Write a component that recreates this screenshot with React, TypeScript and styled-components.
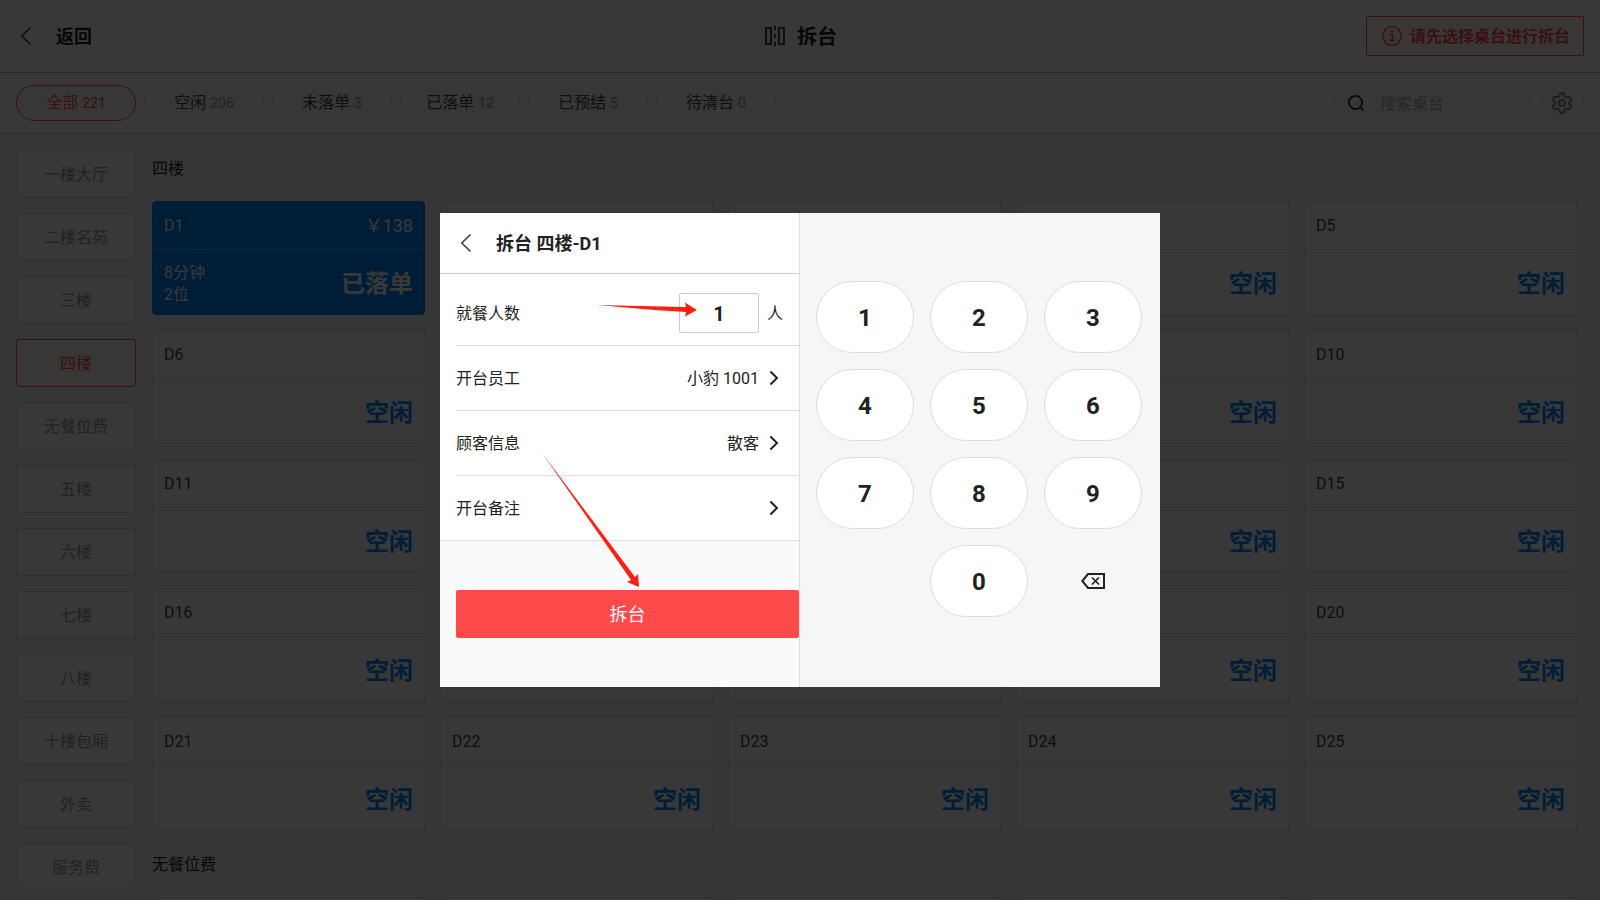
import React from "react";
import styled, { createGlobalStyle, css } from "styled-components";
import { Settings } from "lucide-react";

const GlobalStyle = createGlobalStyle`
  *, *::before, *::after { box-sizing: border-box; }
  body {
    margin: 0;
    font-family: Roboto, "Noto Sans CJK SC", sans-serif;
    font-size: 16px;
    line-height: 23px;
    color: #222;
    background: #f5f5f5;
  }
  button, input { font: inherit; color: inherit; margin: 0; }
  button { padding: 0; border: 0; background: none; cursor: pointer; }
  svg { display: block; flex: none; }
  h1, h2, p { margin: 0; }
`;

const Page = styled.div`
  display: flex;
  flex-direction: column;
  height: 100vh;
  overflow: hidden;
`;

const TopBar = styled.header`
  display: grid;
  grid-template-columns: 1fr auto 1fr;
  align-items: center;
  flex: none;
  height: 73px;
  padding: 0 16px;
  background: #fff;
  border-bottom: 1px solid #ccc;
`;

const BackButton = styled.button`
  display: flex;
  align-items: center;
  justify-self: start;
  gap: 20px;
  font-size: 18px;
  font-weight: 700;
`;

const PageTitle = styled.h1`
  display: flex;
  align-items: center;
  gap: 12px;
  padding-left: 2px;
  font-size: 20px;
  line-height: normal;
  font-weight: 700;
`;

const TitleText = styled.span`
  padding-bottom: 2px;
`;

const Notice = styled.p`
  display: flex;
  align-items: center;
  justify-self: end;
  gap: 8px;
  height: 40px;
  padding: 0 13px 0 15px;
  color: #ff4a4a;
  font-weight: 700;
  background: #fff8f6;
  border: 1px solid #ff4a4a;
  border-radius: 2px;
`;

const FilterBar = styled.div`
  display: flex;
  align-items: center;
  gap: 8px;
  flex: none;
  height: 61px;
  padding: 0 16px;
  background: #fff;
  border-bottom: 1px solid #ccc;
`;

const Pill = styled.button<{ $active?: boolean }>`
  width: 120px;
  height: 36px;
  color: #444;
  background: #fafafa;
  border: 1px solid #e8e8e8;
  border-radius: 18px;
  ${(p) =>
    p.$active &&
    css`
      color: #ff4a4a;
      background: #fff8f6;
      border-color: #ff4a4a;
    `}
`;

const Count = styled.span<{ $active?: boolean }>`
  font-size: 14px;
  color: ${(p) => (p.$active ? "inherit" : "#999")};
`;

const SearchBox = styled.label`
  display: flex;
  align-items: center;
  gap: 16px;
  width: 200px;
  height: 36px;
  margin-left: auto;
  padding: 0 15px;
  background: #fafafa;
  border: 1px solid #e8e8e8;
  border-radius: 18px;
`;

const SearchInput = styled.input`
  flex: 1;
  min-width: 0;
  padding: 0;
  border: 0;
  outline: 0;
  background: transparent;
  &::placeholder { color: #aaa; opacity: 1; }
`;

const SettingsButton = styled.button`
  display: grid;
  place-items: center;
  width: 44px;
  height: 36px;
  color: #888;
  background: #fafafa;
  border: 1px solid #e8e8e8;
  border-radius: 18px;
`;

const Body = styled.div`
  display: flex;
  flex: 1;
  gap: 16px;
  min-height: 0;
  padding-left: 16px;
`;

const Sidebar = styled.nav`
  display: flex;
  flex-direction: column;
  gap: 15px;
  width: 120px;
  margin: 16px 0;
  overflow: hidden;
`;

const AreaButton = styled.button<{ $active?: boolean }>`
  flex: none;
  height: 48px;
  color: ${(p) => (p.$active ? "#ff4a4a" : "#999")};
  background: ${(p) => (p.$active ? "#fff8f6" : "#fff")};
  border: 1px solid ${(p) => (p.$active ? "#ff4a4a" : "#d0d0d0")};
  border-radius: 3px;
`;

const TableArea = styled.main`
  flex: 1;
  padding: 1px 23px 0 0;
  overflow: hidden;
`;

const SectionTitle = styled.h2`
  display: flex;
  align-items: center;
  height: 66px;
  font-size: 16px;
  font-weight: 400;
`;

const TableGrid = styled.div`
  display: grid;
  grid-template-columns: repeat(5, 1fr);
  gap: 15px;
`;

const TableCard = styled.button<{ $busy?: boolean }>`
  display: flex;
  flex-direction: column;
  height: 114px;
  text-align: left;
  color: ${(p) => (p.$busy ? "#fff" : "#444")};
  background: ${(p) => (p.$busy ? "#0085ff" : "#fff")};
  border: 1px solid ${(p) => (p.$busy ? "#0085ff" : "#ddd")};
  border-radius: 4px;
`;

const CardHead = styled.span<{ $busy?: boolean }>`
  display: flex;
  align-items: center;
  justify-content: space-between;
  width: 100%;
  height: 48px;
  padding: 0 11px;
  line-height: 22px;
  border-bottom: 1px solid ${(p) => (p.$busy ? "#4daaff" : "#ddd")};
`;

const Amount = styled.span`
  font-size: 18px;
`;

const CardBody = styled.span`
  display: flex;
  flex: 1;
  align-items: center;
  justify-content: space-between;
  width: 100%;
  padding: 0 11px;
`;

const Seating = styled.span`
  padding-top: 4px;
  line-height: 22px;
`;

const Status = styled.strong<{ $busy?: boolean }>`
  margin-left: auto;
  padding-bottom: 2px;
  font-size: 24px;
  line-height: normal;
  color: ${(p) => (p.$busy ? "#fff" : "#0085ff")};
`;

const Overlay = styled.div`
  position: fixed;
  inset: 0;
  display: grid;
  place-items: center;
  background: rgba(0, 0, 0, 0.78);
`;

const Dialog = styled.section`
  position: relative;
  display: grid;
  grid-template-columns: 1fr 1fr;
  width: 720px;
  background: #f6f6f6;
`;

const FormPane = styled.div`
  display: flex;
  flex-direction: column;
  background: #fafafa;
  border-right: 1px solid #ddd;
`;

const DialogHead = styled.div`
  display: flex;
  align-items: center;
  gap: 20px;
  height: 61px;
  padding: 0 16px;
  background: #fff;
  border-bottom: 1px solid #ccc;
`;

const IconButton = styled.button`
  display: block;
`;

const DialogTitle = styled.h2`
  font-size: 18px;
  font-weight: 700;
`;

const Fields = styled.div`
  padding: 7px 0 0 16px;
  background: #fff;
  border-bottom: 1px solid #ddd;
`;

const rowStyle = css`
  display: flex;
  align-items: center;
  width: 100%;
  height: 65px;
  padding-right: 16px;
  border-bottom: 1px solid #ddd;
`;

const GuestRow = styled.div`
  ${rowStyle}
`;

const LinkRow = styled.button`
  ${rowStyle}
  &:last-child { height: 64px; border-bottom: 0; }
`;

const FieldLabel = styled.label`
  margin-right: auto;
`;

const FieldName = styled.span`
  margin-right: auto;
`;

const FieldValue = styled.span`
  margin-right: 8px;
`;

const GuestInput = styled.input`
  width: 80px;
  height: 40px;
  margin-right: 8px;
  padding: 2px 0 0;
  font-size: 20px;
  line-height: normal;
  font-weight: 700;
  text-align: center;
  background: #fff;
  border: 1px solid #ccc;
  border-radius: 2px;
`;

const Actions = styled.div`
  padding: 49px 0 49px 16px;
`;

const SubmitButton = styled.button`
  display: block;
  width: 100%;
  height: 48px;
  font-size: 18px;
  color: #fff;
  background: #ff4a4a;
  border-radius: 2px;
`;

const Keypad = styled.div`
  display: grid;
  grid-template-columns: repeat(3, 98px);
  grid-auto-rows: 72px;
  gap: 16px;
  padding: 68px 16px;
`;

const Key = styled.button<{ $zero?: boolean }>`
  grid-column: ${(p) => (p.$zero ? 2 : "auto")};
  padding-top: 2px;
  font-size: 24px;
  line-height: normal;
  font-weight: 700;
  background: #fff;
  border: 1px solid #ddd;
  border-radius: 36px;
`;

const DeleteKey = styled.button`
  display: grid;
  place-items: center;
`;

const Arrows = styled.svg`
  position: absolute;
  inset: 0;
  pointer-events: none;
`;

const ChevronLeft = () => (
  <svg width="20" height="20" viewBox="0 0 20 20" fill="none" stroke="#444" strokeWidth="1.7">
    <path d="M14.5 1.5 5.8 10l8.7 8.5" />
  </svg>
);

const ChevronRight = () => (
  <svg width="16" height="16" viewBox="0 0 16 16" fill="none" stroke="#222" strokeWidth="2">
    <path d="m3.4 1.5 6.6 6.5-6.6 6.5" />
  </svg>
);

const SplitIcon = () => (
  <svg width="20" height="20" viewBox="0 0 20 20" fill="none" stroke="#444" strokeWidth="2">
    <path d="M1 2h5v16H1zM14 2h5v16h-5z" />
    <path d="M10 0v4M10 8v4M10 16v4" />
  </svg>
);

const InfoIcon = () => (
  <svg width="20" height="20" viewBox="0 0 20 20" fill="none" stroke="#ff4a4a" strokeWidth="1.4">
    <circle cx="10" cy="10" r="9.2" />
    <path d="M7.5 8.5h2.8v6M7 14.5h6" />
    <circle cx="10" cy="5.3" r="1.1" fill="#ff4a4a" stroke="none" />
  </svg>
);

const SearchIcon = () => (
  <svg width="16" height="16" viewBox="0 0 16 16" fill="none" stroke="#222" strokeWidth="1.8">
    <circle cx="7.5" cy="7.5" r="6.6" />
    <path d="m12 12 3.5 3.5" />
  </svg>
);

const BackspaceIcon = () => (
  <svg width="24" height="16" viewBox="0 0 24 16" fill="none" stroke="#222" strokeWidth="2">
    <path d="M7 1h16v14H7L1.3 8z" />
    <path d="m11 4.5 7 7M18 4.5l-7 7" strokeWidth="1.7" />
  </svg>
);

const filters = [
  { name: "全部", count: 221 },
  { name: "空闲", count: 206 },
  { name: "未落单", count: 3 },
  { name: "已落单", count: 12 },
  { name: "已预结", count: 5 },
  { name: "待清台", count: 0 },
];

const areas = [
  "一楼大厅", "二楼名苑", "三楼", "四楼", "无餐位费", "五楼",
  "六楼", "七楼", "八楼", "十楼包厢", "外卖", "服务费",
];

const tables = Array.from({ length: 25 }, (_, i) => `D${i + 1}`);
const digits = [1, 2, 3, 4, 5, 6, 7, 8, 9];

export default function App() {
  const [guests, setGuests] = React.useState("1");
  const press = (n: number) => setGuests((g) => (g + n).slice(0, 3));

  return (
    <>
      <GlobalStyle />
      <Page>
        <TopBar>
          <BackButton>
            <ChevronLeft />
            返回
          </BackButton>
          <PageTitle>
            <SplitIcon />
            <TitleText>拆台</TitleText>
          </PageTitle>
          <Notice>
            <InfoIcon />
            请先选择桌台进行拆台
          </Notice>
        </TopBar>

        <FilterBar>
          {filters.map((f, i) => (
            <Pill key={f.name} $active={i === 0}>
              {f.name} <Count $active={i === 0}>{f.count}</Count>
            </Pill>
          ))}
          <SearchBox>
            <SearchIcon />
            <SearchInput type="text" placeholder="搜索桌台" />
          </SearchBox>
          <SettingsButton>
            <Settings size={24} strokeWidth={2} />
          </SettingsButton>
        </FilterBar>

        <Body>
          <Sidebar>
            {areas.map((a) => (
              <AreaButton key={a} $active={a === "四楼"}>
                {a}
              </AreaButton>
            ))}
          </Sidebar>
          <TableArea>
            <SectionTitle>四楼</SectionTitle>
            <TableGrid>
              {tables.map((name) => {
                const busy = name === "D1";
                return (
                  <TableCard key={name} $busy={busy}>
                    <CardHead $busy={busy}>
                      {name}
                      {busy && <Amount>￥138</Amount>}
                    </CardHead>
                    <CardBody>
                      {busy && (
                        <Seating>
                          8分钟
                          <br />
                          2位
                        </Seating>
                      )}
                      <Status $busy={busy}>{busy ? "已落单" : "空闲"}</Status>
                    </CardBody>
                  </TableCard>
                );
              })}
            </TableGrid>
            <SectionTitle>无餐位费</SectionTitle>
            <TableGrid>
              {[0, 1, 2, 3, 4].map((n) => (
                <TableCard key={n} />
              ))}
            </TableGrid>
          </TableArea>
        </Body>
      </Page>

      <Overlay>
        <Dialog role="dialog" aria-labelledby="dialog-title">
          <FormPane>
            <DialogHead>
              <IconButton>
                <ChevronLeft />
              </IconButton>
              <DialogTitle id="dialog-title">拆台 四楼-D1</DialogTitle>
            </DialogHead>
            <Fields>
              <GuestRow>
                <FieldLabel htmlFor="guests">就餐人数</FieldLabel>
                <GuestInput
                  id="guests"
                  type="text"
                  inputMode="numeric"
                  value={guests}
                  onChange={(e) => setGuests(e.target.value)}
                />
                人
              </GuestRow>
              <LinkRow>
                <FieldName>开台员工</FieldName>
                <FieldValue>小豹 1001</FieldValue>
                <ChevronRight />
              </LinkRow>
              <LinkRow>
                <FieldName>顾客信息</FieldName>
                <FieldValue>散客</FieldValue>
                <ChevronRight />
              </LinkRow>
              <LinkRow>
                <FieldName>开台备注</FieldName>
                <ChevronRight />
              </LinkRow>
            </Fields>
            <Actions>
              <SubmitButton>拆台</SubmitButton>
            </Actions>
          </FormPane>
          <Keypad>
            {digits.map((n) => (
              <Key key={n} onClick={() => press(n)}>
                {n}
              </Key>
            ))}
            <Key $zero onClick={() => press(0)}>
              0
            </Key>
            <DeleteKey onClick={() => setGuests((g) => g.slice(0, -1))}>
              <BackspaceIcon />
            </DeleteKey>
          </Keypad>
          <Arrows width="720" height="474" viewBox="0 0 720 474" fill="#ff2013">
            <path d="M157 92 246 94 245 89.5 257 97 245 103.5 246 99 215 97z" />
            <path d="M102 240 195 364 198 361 199 374 187 369 191 367z" />
          </Arrows>
        </Dialog>
      </Overlay>
    </>
  );
}
